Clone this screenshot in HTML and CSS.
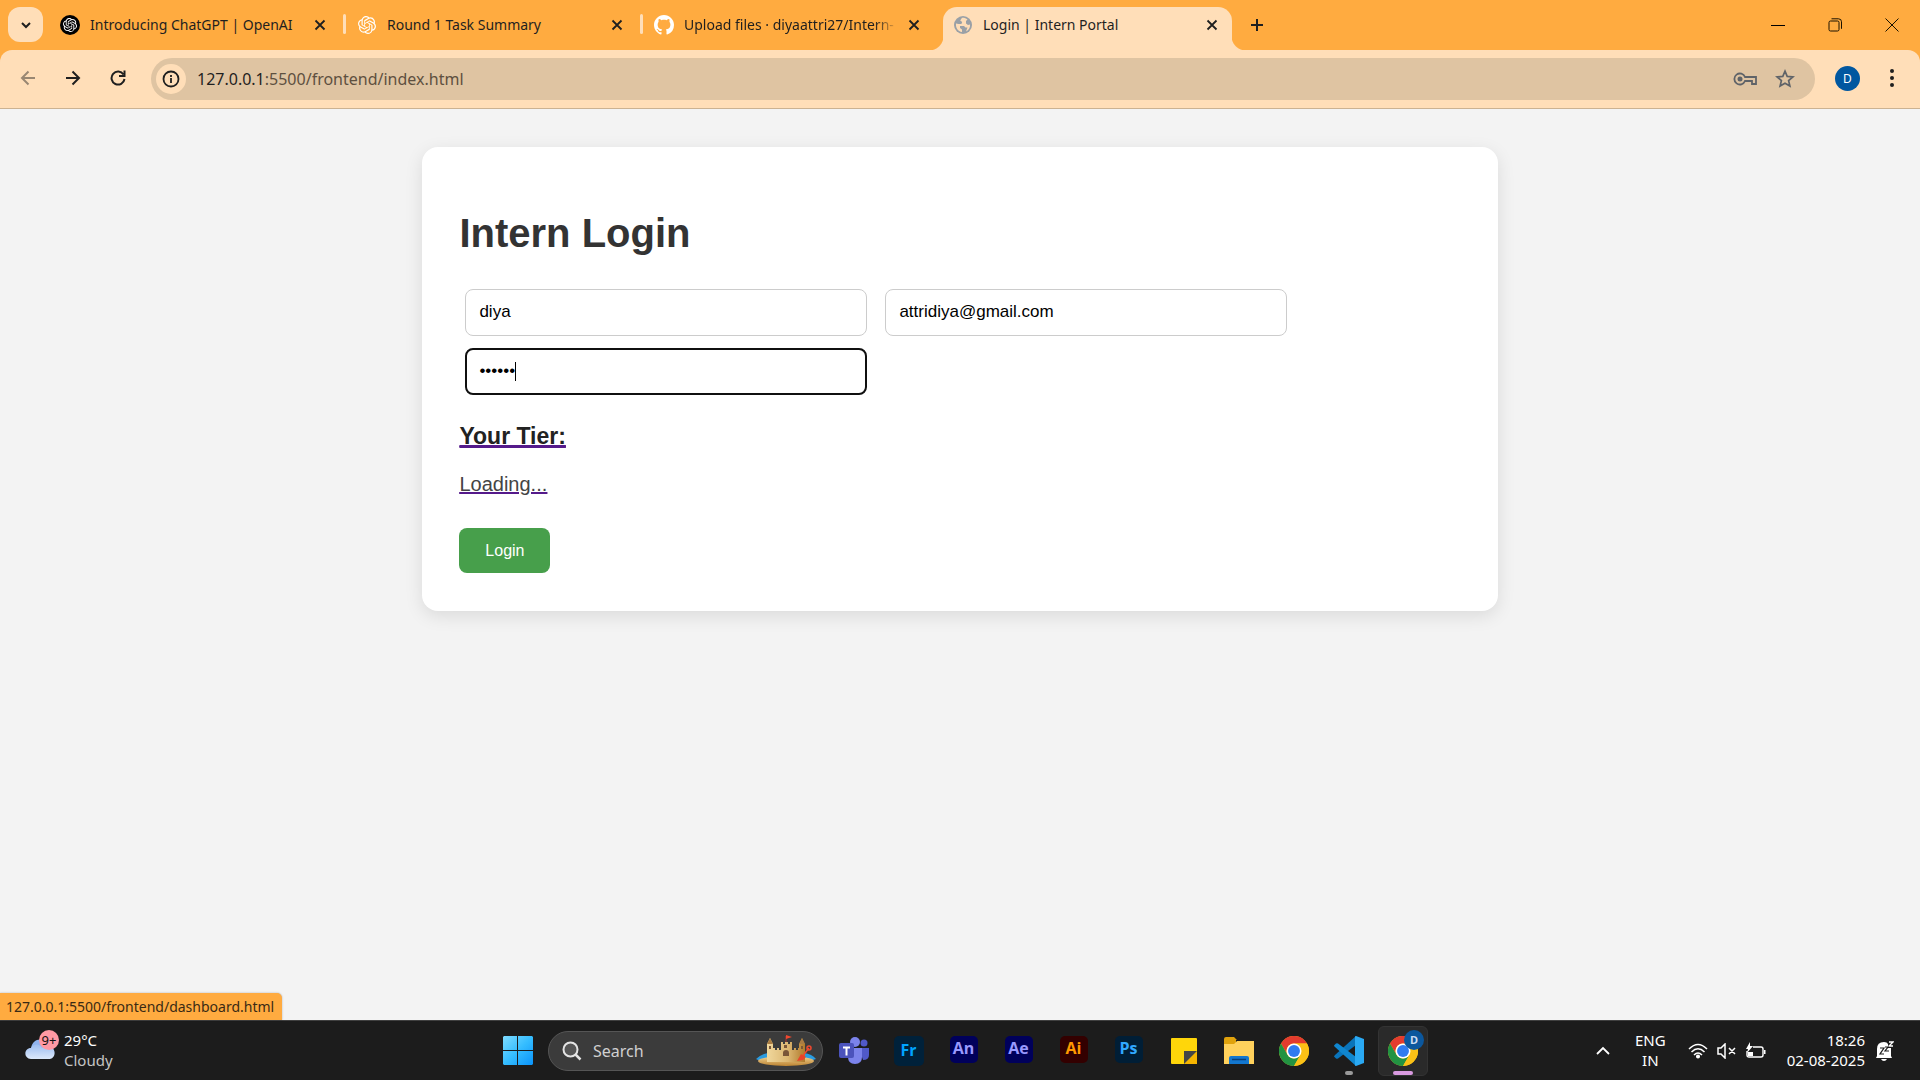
FILE: index.html
```html
<!DOCTYPE html>
<html lang="en">
<head>
<meta charset="utf-8">
<title>Login | Intern Portal</title>
<link rel="stylesheet" href="styles.css">
</head>
<body>
<svg class="defs" width="0" height="0" aria-hidden="true">
  <defs>
    <symbol id="knot" viewBox="0 0 24 24"><path fill="currentColor" d="M22.28 9.82a5.98 5.98 0 0 0-.52-4.91 6.05 6.05 0 0 0-6.51-2.9A6.07 6.07 0 0 0 4.98 4.18a5.98 5.98 0 0 0-4 2.9 6.05 6.05 0 0 0 .74 7.1 5.98 5.98 0 0 0 .51 4.91 6.05 6.05 0 0 0 6.52 2.9A5.98 5.98 0 0 0 13.26 24a6.06 6.06 0 0 0 5.77-4.21 5.99 5.99 0 0 0 4-2.9 6.06 6.06 0 0 0-.75-7.07zm-9.02 12.61a4.48 4.48 0 0 1-2.88-1.04l.14-.08 4.78-2.76a.8.8 0 0 0 .39-.68v-6.74l2.02 1.17a.07.07 0 0 1 .04.05v5.58a4.5 4.5 0 0 1-4.49 4.5zM3.6 18.3a4.47 4.47 0 0 1-.54-3.01l.14.09 4.78 2.76a.77.77 0 0 0 .78 0l5.84-3.37v2.33a.08.08 0 0 1-.03.06L9.74 19.95a4.5 4.5 0 0 1-6.14-1.65zM2.34 7.9a4.49 4.49 0 0 1 2.37-1.98V11.6a.77.77 0 0 0 .39.68l5.81 3.35-2.02 1.17a.08.08 0 0 1-.07 0l-4.83-2.79A4.5 4.5 0 0 1 2.34 7.87zm16.6 3.85-5.84-3.38L15.12 7.2a.08.08 0 0 1 .07 0l4.83 2.79a4.49 4.49 0 0 1-.68 8.1v-5.67a.79.79 0 0 0-.4-.67zm2.01-3.02-.14-.09-4.77-2.78a.78.78 0 0 0-.79 0L9.41 9.23V6.9a.07.07 0 0 1 .03-.06l4.83-2.79a4.5 4.5 0 0 1 6.68 4.66zM8.31 12.86l-2.02-1.16a.08.08 0 0 1-.04-.06V6.07a4.5 4.5 0 0 1 7.38-3.45l-.14.08L8.7 5.46a.8.8 0 0 0-.39.68zm1.1-2.36L12.01 9l2.6 1.5v3l-2.6 1.5-2.6-1.5z"/></symbol>
    <symbol id="cross" viewBox="0 0 12 12"><path d="M1.5 1.5l9 9M10.500 1.500l-9 9" stroke="currentColor" stroke-width="1.8"/></symbol>
    <symbol id="chrome" viewBox="0 0 48 48">
      <circle cx="24" cy="24" r="24" fill="#fbc116"/>
      <path fill="#e33b2e" d="M3.200 12A24 24 0 0 1 44.800 12H24A12 12 0 0 0 13.600 30z"/>
      <path fill="#229342" d="M3.200 12A24 24 0 0 0 24 48L34.400 30A12 12 0 0 1 13.600 30z"/>
      <path fill="#fbc116" d="M24 48A24 24 0 0 0 44.800 12H24A12 12 0 0 1 34.400 30z"/>
      <circle cx="24" cy="24" r="12" fill="#fff"/><circle cx="24" cy="24" r="9.500" fill="#2f7bf0"/>
    </symbol>
  </defs>
</svg>

<header class="browser">
  <div class="tabstrip">
    <button class="tab-search" type="button" aria-label="Search tabs"><svg width="12" height="12" viewBox="0 0 12 12"><path d="M2 4l4 4 4-4" fill="none" stroke="#1f1f1f" stroke-width="2"/></svg></button>
    <div class="tab">
      <span class="favicon dark"><svg width="14" height="14"><use href="#knot"/></svg></span>
      <span class="tab-title">Introducing ChatGPT | OpenAI</span>
      <button class="close" type="button" aria-label="Close tab"><svg width="12" height="12"><use href="#cross"/></svg></button>
    </div>
    <div class="tab divided">
      <span class="favicon white"><svg width="18" height="18"><use href="#knot"/></svg></span>
      <span class="tab-title">Round 1 Task Summary</span>
      <button class="close" type="button" aria-label="Close tab"><svg width="12" height="12"><use href="#cross"/></svg></button>
    </div>
    <div class="tab divided">
      <span class="favicon white"><svg width="20" height="20" viewBox="0 0 16 16"><path fill="currentColor" d="M8 0C3.580 0 0 3.580 0 8c0 3.540 2.290 6.530 5.470 7.590.4.070.55-.17.55-.38 0-.19-.01-.82-.01-1.490-2.010.37-2.530-.49-2.690-.94-.09-.23-.48-.94-.82-1.130-.28-.15-.68-.52-.01-.53.63-.01 1.080.58 1.230.82.72 1.210 1.870.87 2.330.66.070-.52.28-.87.51-1.070-1.780-.2-3.640-.89-3.640-3.950 0-.87.31-1.590.82-2.150-.08-.2-.36-1.020.08-2.120 0 0 .67-.21 2.200.82.64-.18 1.320-.27 2-.27s1.360.09 2 .27c1.530-1.040 2.200-.82 2.200-.82.44 1.100.16 1.920.08 2.120.51.56.82 1.270.82 2.150 0 3.070-1.870 3.750-3.650 3.950.29.25.54.73.54 1.480 0 1.070-.01 1.930-.01 2.200 0 .21.15.46.55.38A8.010 8.010 0 0 0 16 8c0-4.420-3.580-8-8-8z"/></svg></span>
      <span class="tab-title fade">Upload files · diyaattri27/Intern-</span>
      <button class="close" type="button" aria-label="Close tab"><svg width="12" height="12"><use href="#cross"/></svg></button>
    </div>
    <div class="tab active">
      <span class="favicon"><svg width="18" height="18" viewBox="0 0 18 18"><circle cx="9" cy="9" r="9" fill="#9aa0a6"/><path fill="#ffdeb8" d="M8 1.800L6.200 4.500l2 1.500-.8 2H4.500L2 7.500C1.600 12 4 15.500 8 16v-2.500L6 12v-2h4l1.500 1.500h2L12 15.500c3-1.500 4.300-4 4-7L14 9l-2-1.500V5l1.500-1.500C12 2.200 10 1.600 8 1.800z"/></svg></span>
      <span class="tab-title">Login | Intern Portal</span>
      <button class="close" type="button" aria-label="Close tab"><svg width="12" height="12"><use href="#cross"/></svg></button>
    </div>
    <button class="new-tab" type="button" aria-label="New tab"><svg width="14" height="14" viewBox="0 0 14 14"><path d="M7 1v12M1 7h12" stroke="#1f1f1f" stroke-width="2"/></svg></button>
    <div class="window-controls">
      <button type="button" aria-label="Minimize"><svg width="14" height="14" viewBox="0 0 14 14"><path d="M0 7.500h14" stroke="#000"/></svg></button>
      <button type="button" aria-label="Restore"><svg width="14" height="14" viewBox="0 0 14 14" fill="none" stroke="#1a1200"><rect x="1" y="3" width="10" height="10" rx="1.500"/><path d="M3.500 .8h7a3 3 0 0 1 3 3v7"/></svg></button>
      <button type="button" aria-label="Close"><svg width="14" height="14" viewBox="0 0 14 14"><path d="M.5.5l13 13M13.500.5l-13 13" stroke="#1a1200"/></svg></button>
    </div>
  </div>
  <div class="toolbar">
    <button class="nav disabled" type="button" aria-label="Back"><svg width="16" height="16" viewBox="0 0 16 16"><path d="M15 8H2.500M8.500 1.500L2 8l6.500 6.500"/></svg></button>
    <button class="nav" type="button" aria-label="Forward"><svg width="16" height="16" viewBox="0 0 16 16"><path d="M1 8h12.500M7.500 1.500L14 8l-6.500 6.500"/></svg></button>
    <button class="nav" type="button" aria-label="Reload"><svg width="16" height="16" viewBox="0 0 16 16"><path d="M13.500 4.500A6.500 6.500 0 1 0 14.500 9M14.500 .5v5.500H9"/></svg></button>
    <div class="omnibox">
      <button class="site-info" type="button" aria-label="Site information"><svg width="18" height="18" viewBox="0 0 18 18"><circle cx="9" cy="9" r="7.500" fill="none" stroke="#1f1f1f" stroke-width="1.800"/><path d="M9 8v5M9 5v2" stroke="#1f1f1f" stroke-width="1.800"/></svg></button>
      <span class="url"><b>127.0.0.1</b>:5500/frontend/index.html</span>
      <button class="omni-action" type="button" aria-label="Passwords"><svg width="24" height="14" viewBox="0 0 24 14"><path d="M12 5h11v7h-4V9h-7a5.500 5.500 0 1 1 0-4z" fill="none" stroke="#5f6368" stroke-width="1.800"/><circle cx="7" cy="7" r="2.500" fill="#5f6368"/></svg></button>
      <button class="omni-action" type="button" aria-label="Bookmark"><svg width="20" height="20" viewBox="0 0 20 20"><path d="M10 2.200l2.200 5.200 5.700.5-4.300 3.700 1.300 5.500-4.900-2.900-4.900 2.900 1.300-5.500L2.100 7.900l5.700-.5z" fill="none" stroke="#5f6368" stroke-width="1.700"/></svg></button>
    </div>
    <button class="profile" type="button">D</button>
    <button class="menu" type="button" aria-label="Menu"><svg width="4" height="18" viewBox="0 0 4 18" fill="#1f1f1f"><circle cx="2" cy="2" r="2"/><circle cx="2" cy="9" r="2"/><circle cx="2" cy="16" r="2"/></svg></button>
  </div>
</header>

<main class="page">
  <form class="card">
    <h1>Intern Login</h1>
    <div class="fields">
      <input type="text" value="diya" aria-label="Name">
      <input type="email" value="attridiya@gmail.com" aria-label="Email">
      <span class="password"><input class="focused" type="password" value="secret" aria-label="Password"><i class="caret"></i></span>
    </div>
    <a class="tier" href="#dashboard">
      <h3>Your Tier:</h3>
      <p>Loading...</p>
    </a>
    <button class="login" type="button">Login</button>
  </form>
  <div class="status">127.0.0.1:5500/frontend/dashboard.html</div>
</main>

<footer class="taskbar">
  <div class="weather">
    <span class="cloud">
      <svg width="30" height="20" viewBox="0 0 30 20"><defs><linearGradient id="cl" x2="0" y2="1"><stop stop-color="#9dbdf0"/><stop offset="1" stop-color="#dce9fb"/></linearGradient></defs><path fill="#8fb3ee" d="M6 9C7 2 13-1 18 1s6 5 6 8z"/><path fill="url(#cl)" d="M6 20C-2 19-1 9 6 9c3-5 9-4 11 0 3-3 7-3 9-1 5 2 5 11-1 12z"/></svg>
      <span class="badge">9+</span>
    </span>
    <div class="lines"><span>29°C</span><span class="dim">Cloudy</span></div>
  </div>
  <nav class="apps" aria-label="Taskbar">
    <button class="app" type="button" aria-label="Start"><svg width="30" height="30" viewBox="0 0 30 30"><defs><linearGradient id="wn" x2="1" y2="1"><stop stop-color="#7fdcff"/><stop offset=".5" stop-color="#35bdff"/><stop offset="1" stop-color="#0a93fa"/></linearGradient></defs><path fill="url(#wn)" d="M1 0h13v14H0V1zM15 0h14l1 1v13H15zM0 15h14v14H1l-1-1zM15 15h15v13l-1 1H15z"/></svg></button>
    <label class="search">
      <svg width="20" height="20" viewBox="0 0 20 20" fill="#555" stroke="#e4e4e4" stroke-width="2"><path d="M13.500 13.500l5 5" stroke-width="2.500"/><circle cx="8.500" cy="8.500" r="7"/></svg>
      <input type="text" placeholder="Search" aria-label="Search">
      <svg width="60" height="32" viewBox="0 0 60 32">
        <defs><linearGradient id="sand" x2="1"><stop stop-color="#f0d79c"/><stop offset=".55" stop-color="#dcb772"/><stop offset="1" stop-color="#b07a2c"/></linearGradient><linearGradient id="base" x2="0" y2="1"><stop stop-color="#f3d595"/><stop offset="1" stop-color="#bd8432"/></linearGradient></defs>
        <path fill="#2a9be0" d="M0 24q5-5 12-6l36 0q8 1 12 6l-6 2H4z"/><ellipse cx="30" cy="26" rx="28" ry="5" fill="url(#base)"/>
        <path fill="url(#sand)" d="M11 9l3-6 3 6v18h-6zM43 9l3-6 3 6v18h-6zM17 13h2v2h2v-2h2v2h2V7h2v2h2V7h3v2h2V7h2v8h2v-2h2v2h2v-2h1v14H17z"/>
        <path fill="#a97c42" d="M11 9l3-6 3 6zM43 9l3-6 3 6z"/>
        <path fill="#7a5638" d="M27 21v-3a3 3 0 0 1 6 0v3zM13 11h2v3h-2zM45 11h2v3h-2zM28 10h3v3h-3z"/>
        <path d="M30 7V1" stroke="#a33"/><path fill="#f0492f" d="M30 0l6 2-6 2z"/>
        <path d="M53 13l-7 9" stroke="#f0492f" stroke-width="1.500"/><circle cx="53" cy="13" r="2" fill="none" stroke="#f0492f" stroke-width="1.500"/><path fill="#e8432b" d="M45 19l5 3-3 3-6 1z"/>
      </svg>
    </label>
    <button class="app" type="button" aria-label="Teams"><svg width="30" height="28" viewBox="0 0 30 28"><circle cx="25" cy="6" r="3.500" fill="#5059c9"/><path fill="#5059c9" d="M20 11h10v7q0 5-6 5z"/><circle cx="16" cy="5" r="5" fill="#7b83eb"/><path fill="#7b83eb" d="M9 11h14v9q0 7-7 7t-7-7z"/><rect y="6" width="15" height="15" rx="2" fill="#4b53bc"/><path d="M4 10.500h7M7.500 10.500v8" stroke="#fff" stroke-width="2"/></svg></button>
    <button class="app" type="button"><span class="tile fr">Fr</span></button>
    <button class="app" type="button"><span class="tile an">An</span></button>
    <button class="app" type="button"><span class="tile an">Ae</span></button>
    <button class="app" type="button"><span class="tile ai">Ai</span></button>
    <button class="app" type="button"><span class="tile ps">Ps</span></button>
    <button class="app" type="button" aria-label="Sticky Notes"><svg width="26" height="26" viewBox="0 0 26 26"><rect width="26" height="26" rx="1" fill="#ffd60a"/><path fill="#f5b400" d="M13 26h13V13z"/><path fill="#454545" d="M13 13h13L13 26z"/></svg></button>
    <button class="app" type="button" aria-label="File Explorer"><svg width="30" height="28" viewBox="0 0 30 28"><path fill="#e0a20c" d="M0 2q0-2 2-2h8l3 3h-1v7H0z"/><path fill="#ffd15c" d="M0 7h10l3-3h17v23H0z"/><path fill="#1377cf" d="M5 27v-6q0-2 2-2h16q2 0 2 2v6z"/><path d="M8 22.500h14" stroke="#083f78" stroke-width="1.500"/></svg></button>
    <button class="app" type="button" aria-label="Chrome"><svg width="30" height="30"><use href="#chrome"/></svg></button>
    <button class="app running" type="button" aria-label="Visual Studio Code"><svg width="30" height="30" viewBox="0 0 30 30"><path fill="#0a74ba" d="M0 20.500l2 2q1 .7 2 0L22 9V0L1 19q-1 1-1 1.500z"/><path fill="#1087d0" d="M0 9.500l2-2q1-.7 2 0L22 21v9L1 11q-1-1-1-1.500z"/><path fill="#2aa9f3" d="M22 0l8 3v24l-8 3q-1 0-1-1V1q0-1 1-1z"/></svg></button>
    <button class="app current" type="button" aria-label="Chrome, D"><svg width="30" height="30"><use href="#chrome"/></svg><span class="app-badge">D</span></button>
  </nav>
  <div class="tray">
    <button class="chevron" type="button" aria-label="Hidden icons"><svg width="14" height="9" viewBox="0 0 14 9"><path d="M1 8l6-6 6 6" fill="none" stroke="#fff" stroke-width="1.800"/></svg></button>
    <div class="lines lang"><span>ENG</span><span>IN</span></div>
    <div class="indicators">
      <svg width="20" height="16" viewBox="0 0 20 16" fill="none" stroke="#fff" stroke-width="1.500"><path d="M1 6q9-9 18 0M3.500 9q6.500-6.500 13 0M6 12q4-4 8 0"/><circle cx="10" cy="13.500" r="1.300" fill="#fff"/></svg>
      <svg width="20" height="16" viewBox="0 0 20 16" fill="none" stroke="#fff" stroke-width="1.500"><path d="M1 5h3l4-4v14l-4-4H1zM12 5l6 6M18 5l-6 6"/></svg>
      <svg width="21" height="18" viewBox="0 0 21 18"><path d="M7 5h8q2 0 2 2v6q0 2-2 2H3q-2 0-2-2V9" fill="none" stroke="#fff" stroke-width="1.400"/><path fill="#fff" d="M18 8h1.500v4H18zM4 0L0 7h2l-1 4 6-7H4zM2 10h5v4H2z"/></svg>
    </div>
    <div class="lines clock"><span>18:26</span><span>02-08-2025</span></div>
    <svg class="bell" width="18" height="20" viewBox="0 0 18 20"><path fill="#fff" d="M1 15V8q0-7 7-7 3 0 4 2v4h3v8l1 2H0zM5 18h6q-1 2-3 2t-3-2z"/><path d="M13 1h4l-4 4h4" fill="none" stroke="#fff" stroke-width="1.300"/><path d="M4 7h4l-4 6h4M9 6h3l-3 4h4" fill="none" stroke="#1c1c1c" stroke-width="1.200"/></svg>
  </div>
</footer>
</body>
</html>
```
FILE: styles.css
```css
* { box-sizing: border-box; }
body {
  margin: 0;
  min-height: 100vh;
  display: flex;
  flex-direction: column;
  background: #f3f3f3;
  font-family: "Liberation Sans", Arial, sans-serif;
}
.defs { position: absolute; }
button { border: 0; padding: 0; background: none; font: inherit; color: inherit; }
svg { display: block; flex: none; }

.browser, .taskbar, .status { font-family: "Noto Sans", "Open Sans", sans-serif; }
.browser { background: #ffab40; color: #1f1f1f; }
.tabstrip { display: flex; height: 50px; padding: 7px 0 0 8px; }
.tab-search {
  display: grid;
  place-items: center;
  width: 35px;
  height: 35px;
  margin-right: 3px;
  border-radius: 12px;
  background: #ffdeb8;
}
.tab {
  position: relative;
  display: flex;
  align-items: center;
  flex: 0 1 297px;
  min-width: 0;
  height: 43px;
  padding: 0 13px 8px 14px;
  font-size: 14px;
}
.tab.divided::before {
  content: "";
  position: absolute;
  left: 0;
  top: 7px;
  width: 3px;
  height: 20px;
  border-radius: 2px;
  background: #ffdeb8;
}
.tab.active {
  flex-basis: 289px;
  margin-left: 6px;
  padding: 0 10px 8px;
  border-radius: 14px 14px 0 0;
  background: #ffdeb8;
}
.tab.active::before, .tab.active::after {
  content: "";
  position: absolute;
  bottom: 0;
  width: 14px;
  height: 14px;
}
.tab.active::before { left: -14px; background: radial-gradient(circle at 0 0, transparent 14px, #ffdeb8 15px); }
.tab.active::after { right: -14px; background: radial-gradient(circle at 100% 0, transparent 14px, #ffdeb8 15px); }
.favicon {
  display: grid;
  place-items: center;
  flex: none;
  width: 20px;
  height: 20px;
  margin-right: 10px;
  border-radius: 50%;
}
.favicon.dark { background: #000; color: #fff; }
.favicon.white { color: #fff; }
.tab-title { flex: 1; min-width: 0; white-space: nowrap; line-height: 20px; }
.fade { mask-image: linear-gradient(to left, transparent, #000 24px); }
.close { display: grid; place-items: center; width: 20px; height: 20px; margin-left: 6px; }
.new-tab { display: grid; place-items: center; width: 36px; height: 35px; margin-left: 7px; }
.window-controls { display: flex; margin-left: auto; height: 35px; }
.window-controls button { display: grid; place-items: center; width: 57px; }

.toolbar {
  display: flex;
  align-items: center;
  height: 59px;
  padding: 0 10px 2px;
  border-bottom: 1px solid #cbb292;
  border-radius: 12px 12px 0 0;
  background: #ffdeb8;
}
.nav { display: grid; place-items: center; width: 36px; height: 36px; margin-right: 9px; }
.nav svg { fill: none; stroke: #1f1f1f; stroke-width: 2; }
.nav.disabled { opacity: .45; }
.omnibox {
  display: flex;
  align-items: center;
  flex: 1;
  height: 42px;
  margin: 1px 20px 0 6px;
  padding: 0 10px 0 5px;
  border-radius: 21px;
  background: #dfc4a2;
}
.site-info { display: grid; place-items: center; width: 30px; height: 30px; border-radius: 50%; background: #ffdeb8; }
.url { flex: 1; margin-left: 11px; font-size: 16px; line-height: 24px; color: #5e5040; }
.url b { font-weight: 400; color: #1f1f1f; }
.omni-action { display: grid; place-items: center; width: 40px; height: 36px; }
.profile { width: 25px; height: 25px; border-radius: 50%; background: #0057a0; color: #fff; font-size: 12px; }
.menu { display: grid; place-items: center; width: 36px; height: 36px; margin-left: 14px; }

.page { position: relative; flex: 1; padding: 38px 0; }
.card {
  width: 56%;
  margin: 0 auto;
  padding: 63px 37px 38px;
  border-radius: 16px;
  background: #fff;
  box-shadow: 0 5px 18px rgba(0, 0, 0, .1);
}
h1 { margin: 0 0 33px; font-size: 40px; line-height: 46px; color: #333; }
.fields { display: flex; flex-wrap: wrap; gap: 12px 18px; padding-left: 6px; }
.fields input {
  width: 402px;
  height: 47px;
  padding: 0 13px 2px;
  border: 1px solid #ccc;
  border-radius: 8px;
  background: #fff;
  color: #000;
  font: 17px "Liberation Sans", Arial, sans-serif;
}
.fields .focused { padding: 0 12px 2px; border: 2px solid #101010; outline: 0; }
.password { position: relative; display: flex; }
.caret { position: absolute; left: 50px; top: 14px; width: 1px; height: 19px; background: #000; }
.tier { display: block; width: max-content; color: #551a8b; }
.tier h3 { margin: 28px 0 24px; font-size: 23px; line-height: 26px; color: #222; text-decoration: underline #551a8b 2px; }
.tier p { margin: 0 0 32px; font-size: 20px; line-height: 23px; color: #444; text-decoration: underline #551a8b 2px; }
.login { display: block; width: 91px; height: 45px; border-radius: 8px; background: #479f4b; color: #fff; font-size: 16px; }
.status {
  position: absolute;
  left: 0;
  bottom: 0;
  height: 27px;
  padding: 0 8px 0 6px;
  border-radius: 0 5px 0 0;
  background: #ffab40;
  box-shadow: 0 0 2px rgba(0, 0, 0, .3);
  color: #3a2a14;
  font-size: 14px;
  line-height: 27px;
}

.taskbar {
  display: grid;
  grid-template-columns: 1fr auto 1fr;
  align-items: center;
  height: 60px;
  border-top: 1px solid #404040;
  background: #1c1c1c;
  color: #fff;
  font-size: 15px;
}
.lines { display: flex; flex-direction: column; padding-bottom: 2px; line-height: 20px; }
.dim { color: #c4c4c4; }
.weather { display: flex; align-items: center; padding-left: 25px; }
.cloud { position: relative; margin: 0 9px 4px 0; }
.badge {
  position: absolute;
  left: 14px;
  top: -9px;
  width: 20px;
  height: 20px;
  border-radius: 50%;
  background: #ff99a4;
  color: #111;
  font-size: 13px;
  line-height: 20px;
  text-align: center;
}
.apps { display: flex; align-items: center; }
.app { position: relative; display: grid; place-items: center; width: 55px; height: 50px; }
.search {
  display: flex;
  align-items: center;
  width: 275px;
  height: 40px;
  margin: 0 3px;
  padding: 0 6px 0 13px;
  border: 1px solid #555;
  border-radius: 20px;
  background: #3b3b3b;
}
.search input { flex: 1; min-width: 0; margin-left: 9px; border: 0; background: none; font: 16px "Noto Sans", sans-serif; }
.search input::placeholder { color: #d0d0d0; opacity: 1; }
.tile {
  width: 28px;
  height: 27px;
  margin-bottom: 3px;
  border-radius: 5px;
  font: 700 16px/25px "Open Sans", sans-serif;
  text-align: center;
}
.fr { width: 30px; height: 30px; margin-bottom: 0; line-height: 29px; background: #00213a; color: #00a4ff; }
.an { background: #00005b; color: #9999ff; }
.ai { background: #330000; color: #ff9a00; }
.ps { background: #001e36; color: #31a8ff; }
.running::after, .current::after {
  content: "";
  position: absolute;
  bottom: 1px;
  left: 50%;
  width: 8px;
  height: 4px;
  margin-left: -4px;
  border-radius: 2px;
  background: #9a9a9a;
}
.current { width: 50px; margin: 0 2px; border: 1px solid #333; border-radius: 6px; background: #2a2a2a; }
.current::after { bottom: 0; width: 20px; margin-left: -10px; background: #d99ae0; }
.app-badge {
  position: absolute;
  right: 3px;
  top: 3px;
  width: 20px;
  height: 20px;
  border-radius: 50%;
  background: #0b579d;
  color: #c9dcf2;
  font-size: 11px;
  font-weight: 700;
  line-height: 20px;
}
.tray { display: flex; align-items: center; justify-content: flex-end; padding-right: 26px; }
.lang { align-items: center; margin: 0 22px 0 25px; }
.indicators { display: flex; align-items: center; gap: 9px; }
.clock { align-items: flex-end; margin: 0 11px 0 20px; }
```
